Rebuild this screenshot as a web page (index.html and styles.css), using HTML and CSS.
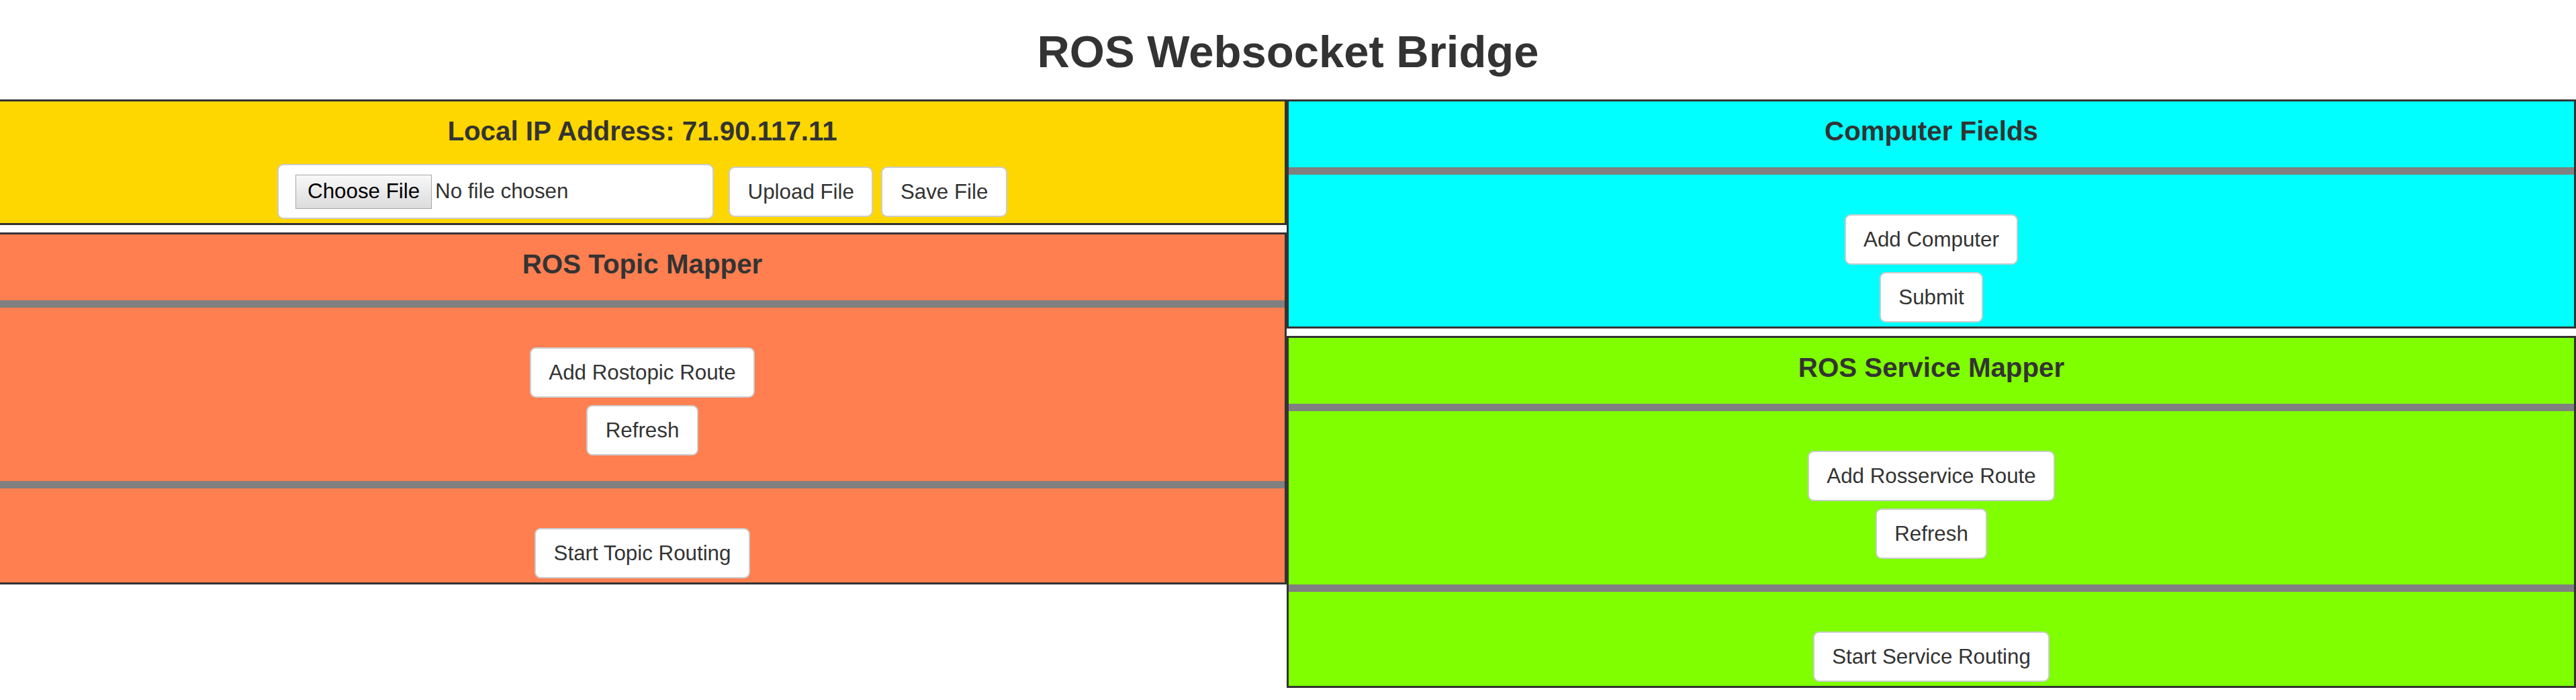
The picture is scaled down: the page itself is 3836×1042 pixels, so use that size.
FILE: index.html
```html
<!DOCTYPE html>
<html lang="en">
<head>
<meta charset="utf-8">
<title>ROS Websocket Bridge</title>
<link rel="stylesheet" href="styles.css">
</head>
<body>
  <h1 class="page-title">ROS Websocket Bridge</h1>
  <div class="layout">
    <div class="column">
      <section class="panel panel-ip">
        <h3 class="panel-title">Local IP Address: 71.90.117.11</h3>
        <div class="file-row">
          <label class="file-box">
            <input type="file" class="file-input">
            <span class="file-btn">Choose File</span>
            <span class="file-name">No file chosen</span>
          </label>
          <button class="btn btn-upload" type="button">Upload File</button>
          <button class="btn" type="button">Save File</button>
        </div>
      </section>
      <section class="panel panel-topic">
        <h3 class="panel-title">ROS Topic Mapper</h3>
        <hr class="divider">
        <div class="panel-body panel-body-routes">
          <button class="btn" type="button">Add Rostopic Route</button>
          <button class="btn" type="button">Refresh</button>
        </div>
        <hr class="divider">
        <div class="panel-body">
          <button class="btn" type="button">Start Topic Routing</button>
        </div>
      </section>
    </div>
    <div class="column">
      <section class="panel panel-computer">
        <h3 class="panel-title">Computer Fields</h3>
        <hr class="divider">
        <div class="panel-body">
          <button class="btn" type="button">Add Computer</button>
          <button class="btn" type="button">Submit</button>
        </div>
      </section>
      <section class="panel panel-service">
        <h3 class="panel-title">ROS Service Mapper</h3>
        <hr class="divider">
        <div class="panel-body panel-body-routes">
          <button class="btn" type="button">Add Rosservice Route</button>
          <button class="btn" type="button">Refresh</button>
        </div>
        <hr class="divider">
        <div class="panel-body">
          <button class="btn" type="button">Start Service Routing</button>
        </div>
      </section>
    </div>
  </div>
</body>
</html>
```

FILE: styles.css
```css
html, body {
  margin: 0;
  padding: 0;
  background: #ffffff;
}

body {
  font-family: "Liberation Sans", Arial, Helvetica, sans-serif;
  font-size: 31.3px;
  color: #333333;
  overflow: hidden;
}

.page-title {
  margin: 38px 0 33px;
  font-size: 67px;
  line-height: 77px;
  font-weight: bold;
  text-align: center;
  color: #333333;
}

.layout {
  display: grid;
  grid-template-columns: 1919px 1fr;
  margin-left: -3px;
  align-items: start;
}

.column {
  display: flex;
  flex-direction: column;
  gap: 11px;
}

.panel {
  border: 3px solid #333333;
}

.panel-ip { background: #ffd700; padding-bottom: 6px; }
.panel-topic { background: #ff7f50; }
.panel-computer { background: #00ffff; }
.panel-service { background: #7fff00; }

.panel-title {
  margin: 0;
  padding: 21.5px 0 30.5px;
  font-size: 40.3px;
  line-height: 46px;
  font-weight: bold;
  text-align: center;
  color: #333333;
}

.panel-ip .panel-title {
  padding-bottom: 0;
}

.divider {
  margin: 0;
  border: 0;
  height: 11px;
  background: #808080;
}

.panel-body {
  display: flex;
  flex-direction: column;
  align-items: center;
  gap: 11px;
  padding: 59px 0 6px;
}

.panel-body-routes {
  padding-bottom: 38px;
}

.btn {
  font-family: "Liberation Sans", Arial, Helvetica, sans-serif;
  font-size: 31.3px;
  line-height: 45px;
  color: #333333;
  background: #ffffff;
  border: 2px solid #cccccc;
  border-radius: 9px;
  padding: 13px 26.5px;
  margin: 0;
  cursor: pointer;
}

.file-row {
  display: flex;
  justify-content: center;
  align-items: center;
  margin-top: 25.5px;
  height: 82px;
}

.file-box {
  box-sizing: border-box;
  width: 650px;
  height: 82px;
  display: flex;
  align-items: center;
  padding: 0 25px;
  background: #ffffff;
  border: 2px solid #cccccc;
  border-radius: 9px;
  margin-right: 22px;
}

.file-input {
  display: none;
}

.file-btn {
  box-sizing: border-box;
  height: 51px;
  line-height: 36px;
  padding: 6.5px 17px;
  color: #000000;
  background: linear-gradient(#f8f8f8, #dcdcdc);
  border: 1px solid #a6a6a6;
  white-space: nowrap;
}

.file-name {
  margin-left: 5px;
  color: #333333;
  white-space: nowrap;
}

.btn-upload {
  margin-right: 12px;
}
```
